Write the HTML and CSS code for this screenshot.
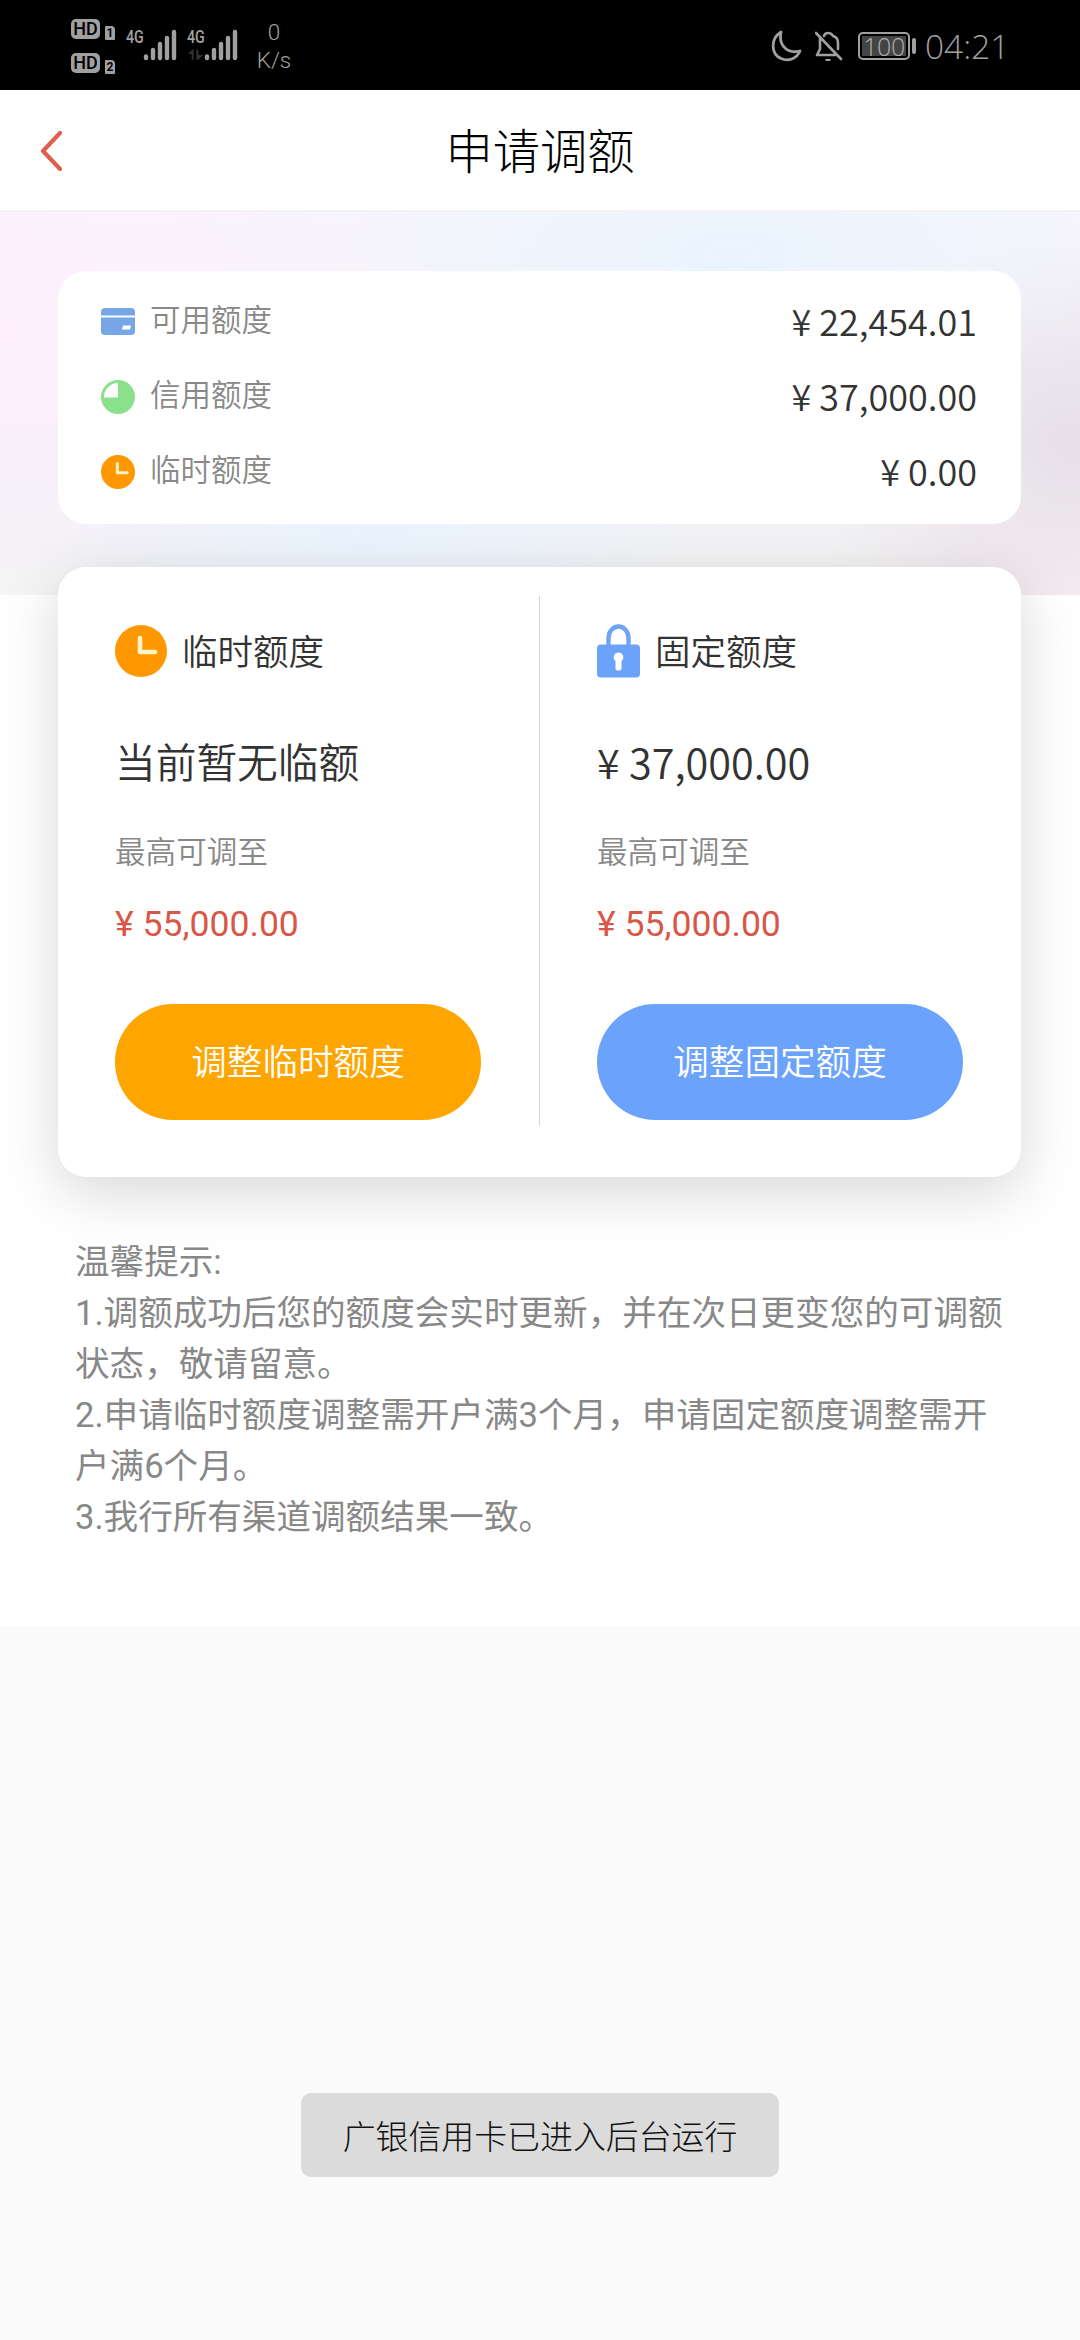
FILE: index.html
```html
<!DOCTYPE html>
<html lang="zh-CN">
<head>
<meta charset="utf-8">
<title>申请调额</title>
<link rel="stylesheet" href="styles.css">
</head>
<body>
<svg class="defs" width="0" height="0">
  <symbol id="clock" viewBox="0 0 52 52"><circle cx="26" cy="26" r="26" fill="#ff9800"/><path d="M25 13v14h15" fill="none" stroke="#fff3c8" stroke-width="4.6" stroke-linecap="round" stroke-linejoin="round"/></symbol>
  <symbol id="signal" viewBox="0 0 34 32"><path d="M3 29v-1.500M10 29v-8M17 29v-14M24 29v-20M31 29v-26" stroke="#a0a0a0" stroke-width="4.400" stroke-linecap="round"/></symbol>
</svg>
<header class="status">
  <div class="hd">
    <div class="hd-row"><span class="hd-box">HD</span><span class="sim">1</span></div>
    <div class="hd-row"><span class="hd-box">HD</span><span class="sim">2</span></div>
  </div>
  <div class="net"><span class="gen">4G</span><svg class="bars" width="34" height="32"><use href="#signal"/></svg></div>
  <div class="net second"><span class="gen">4G</span><svg class="updown" viewBox="0 0 16 12"><path d="M0 5L5 0h1v11H4V5zM9 0h2v6h5l-5 5H9z" fill="#333"/></svg><svg class="bars" width="34" height="32"><use href="#signal"/></svg></div>
  <div class="speed"><span>0</span><span>K/s</span></div>
  <div class="right">
    <svg width="32" height="32" viewBox="0 0 32 32"><path d="M10 2C-1 9 0 24 10 28.500c8 3.500 16-.5 19-7.500C18 24 7 17 10 2z" fill="none" stroke="#a0a0a0" stroke-width="2.800" stroke-linejoin="round"/></svg>
    <svg class="bell" width="28" height="32" viewBox="0 0 28 32"><path d="M5 8v11l-3 6h20M9 6c1-4 7-4 9 0 4 1 5 4 5 7v6M1 3l25 26" fill="none" stroke="#a0a0a0" stroke-width="2.600" stroke-linecap="round" stroke-linejoin="round"/><path d="M10 29h6l-1 2h-4z" fill="#a0a0a0"/></svg>
    <div class="battery"><span>100</span></div><i class="nub"></i>
    <span class="time">04:21</span>
  </div>
</header>
<nav class="title-bar">
  <svg class="back" width="22" height="42" viewBox="0 0 22 42"><path d="M20 3L3 21l17 18" fill="none" stroke="#e06050" stroke-width="4.200" stroke-linecap="round" stroke-linejoin="round"/></svg>
  <h1>申请调额</h1>
</nav>
<main>
  <section class="banner">
    <ul class="summary">
      <li><svg width="34" height="34" viewBox="0 0 34 34"><rect y="3" width="34" height="27" rx="4" fill="#76a6e6"/><path d="M0 11.500h34" stroke="#fff" stroke-width="2"/><path d="M22 20.500h8l-1 4h-8z" fill="#fff"/></svg><span>可用额度</span><b>¥ 22,454.01</b></li>
      <li><svg width="34" height="34" viewBox="0 0 34 34"><circle cx="17" cy="17" r="17" fill="#8ae08b"/><path d="M17 3v14.500H3A14 14 0 0 1 17 3z" fill="#fff"/></svg><span>信用额度</span><b>¥ 37,000.00</b></li>
      <li><svg width="34" height="34"><use href="#clock"/></svg><span>临时额度</span><b>¥ 0.00</b></li>
    </ul>
  </section>
  <section class="limits">
    <div class="limit">
      <h2><svg width="52" height="52"><use href="#clock"/></svg><span>临时额度</span></h2>
      <p class="current">当前暂无临额</p>
      <p class="hint">最高可调至</p>
      <p class="max">¥ 55,000.00</p>
      <button class="btn orange">调整临时额度</button>
    </div>
    <div class="divider"></div>
    <div class="limit">
      <h2><svg width="43" height="54" viewBox="0 0 43 54"><path d="M11.500 21V14a10 11.500 0 0 1 20 0v7" fill="none" stroke="#6ea3f8" stroke-width="4.400"/><rect y="20.500" width="43" height="33" rx="4" fill="#6ba3fa"/><path d="M21.500 28.500a4.800 4.800 0 0 1 3 8.500v7.500a3 2 0 0 1-6 0V37a4.800 4.800 0 0 1 3-8.500z" fill="#fff"/></svg><span>固定额度</span></h2>
      <p class="current amount">¥ 37,000.00</p>
      <p class="hint">最高可调至</p>
      <p class="max">¥ 55,000.00</p>
      <button class="btn blue">调整固定额度</button>
    </div>
  </section>
  <section class="tips">
    <p>温馨提示:</p>
    <p>1.调额成功后您的额度会实时更新，并在次日更变您的可调额<br>状态，敬请留意。</p>
    <p>2.申请临时额度调整需开户满3个月，申请固定额度调整需开<br>户满6个月。</p>
    <p>3.我行所有渠道调额结果一致。</p>
  </section>
</main>
<div class="toast">广银信用卡已进入后台运行</div>
</body>
</html>
```
FILE: styles.css
```css
* { box-sizing: border-box; margin: 0; padding: 0; }
body {
  width: 1080px; height: 2340px; overflow: hidden;
  display: flex; flex-direction: column;
  background: #fafafa; color: #333;
  font-family: "Noto Sans CJK SC", sans-serif; font-weight: 350;
}
svg { display: block; flex: none; }
.defs { position: absolute; }

.status { height: 90px; flex: none; background: #000; color: #a0a0a0; display: flex; padding-left: 71px; font-family: Roboto, sans-serif; }
.hd { width: 55px; padding-top: 19px; display: flex; flex-direction: column; gap: 14px; }
.hd-row { display: flex; align-items: flex-end; gap: 5px; height: 20px; }
.hd-box { width: 29px; height: 20px; border-radius: 5px; background: #a0a0a0; color: #000; font: 500 18px/20px Roboto, sans-serif; text-align: center; }
.sim { width: 10px; height: 14px; border-radius: 1px 4px 1px 1px; background: #a0a0a0; color: #000; font: 700 12px/14px Roboto, sans-serif; text-align: center; margin-bottom: -1px; }
.net { width: 61px; position: relative; }
.gen { display: block; width: 24px; padding-top: 29px; font: 500 19px/16px Roboto, sans-serif; transform: scaleX(.75); transform-origin: left; }
.bars { position: absolute; left: 17px; top: 29px; }
.updown { position: absolute; left: 1px; top: 49px; width: 15px; height: 12px; }
.speed { width: 52px; padding-top: 18px; display: flex; flex-direction: column; align-items: center; font-size: 22.500px; line-height: 28px; }
.right { margin-left: auto; width: 309px; display: flex; align-items: flex-start; padding-top: 30px; }
.bell { margin-left: 12px; }
.battery { width: 52px; height: 28px; margin: 2px 0 0 15px; padding: 2px; border: 2px solid #a0a0a0; border-radius: 5px; }
.battery span { display: block; height: 20px; background: #444; color: #b0b0b0; font: 300 25px/21px "Open Sans", sans-serif; text-align: center; letter-spacing: -.5px; }
.nub { width: 4px; height: 16px; margin: 8px 0 0 2px; border-radius: 2px; background: #a0a0a0; }
.time { margin: -4px 0 0 9px; font: 300 33.500px/40px "Open Sans", sans-serif; }

.title-bar { height: 122px; flex: none; background: #fff; border-bottom: 2px solid #f2f2f3; display: flex; align-items: center; padding-left: 40px; }
.back { margin-top: 1px; }
h1 { flex: 1; margin: -2px 62px 0 0; text-align: center; color: #000; font-size: 47.300px; line-height: 60px; font-weight: 300; }

main { height: 1414px; flex: none; background: #fff; }
.banner {
  height: 383px; padding: 59px 59px 0 58px;
  background:
    radial-gradient(ellipse 460px 270px at 0 32%, #ffeffd, rgba(255,239,253,0) 100%),
    radial-gradient(ellipse 380px 150px at 68% 11%, #eaf4ff, rgba(234,244,255,0) 100%),
    radial-gradient(ellipse 330px 100px at 34% 84%, #eaf4ff, rgba(234,244,255,0) 100%),
    radial-gradient(ellipse 280px 200px at 100% 60%, #e7dfe8, rgba(231,223,232,0) 100%),
    radial-gradient(ellipse 250px 110px at 98% 92%, #f5edf0, rgba(245,237,240,0) 100%),
    linear-gradient(#f6f5fb, #f0f1f5 70%, #f5f5f5);
}
.summary { height: 253px; padding: 13px 44px 0 43px; border-radius: 28px; background: #fff; list-style: none; }
.summary li { height: 75px; display: flex; align-items: center; }
.summary span { margin: -7px 0 0 15px; color: #888; font-size: 30.500px; }
.summary b { margin: -3px 0 0 auto; font-weight: 350; font-size: 36px; }

.limits { width: 963px; height: 610px; margin: -28px 0 0 58px; border-radius: 28px; background: #fff; display: flex; box-shadow: 0 15px 60px rgba(0,0,0,.16); }
.divider { width: 1px; height: 530px; margin-top: 29px; background: #d4d4d4; }
.limit { width: 481px; padding: 57px 58px 0 57px; }
.limit + .divider + .limit { padding-left: 57px; }
h2 { height: 54px; display: flex; align-items: center; gap: 15px; font-size: 35.500px; font-weight: 350; }
h2 span { margin-top: -4px; }
.current { margin-top: 53px; font-size: 40.700px; line-height: 60px; }
.amount { font-size: 41.400px; }
.hint { margin-top: 36px; color: #888; font-size: 30.600px; line-height: 46px; }
.max { margin-top: 28px; color: #d85748; font: 400 35.600px/46px Roboto, sans-serif; }
.btn { display: block; width: 366px; height: 116px; margin-top: 57px; padding-bottom: 5px; border: 0; border-radius: 58px; color: #fff; font: 350 35.600px/111px "Noto Sans CJK SC", sans-serif; }
.orange { background: #ffa500; }
.blue { background: #6ba3fc; }
.tips { padding: 60px 70px 0 75px; color: #888; font-size: 34.600px; line-height: 51px; font-family: Roboto, "Noto Sans CJK SC", sans-serif; font-weight: 400; white-space: nowrap; }
.toast { align-self: center; width: 478px; height: 84px; margin-top: 467px; border-radius: 10px; background: #dbdbdb; color: #111; font-size: 32.900px; line-height: 84px; font-weight: 300; text-align: center; }
```
